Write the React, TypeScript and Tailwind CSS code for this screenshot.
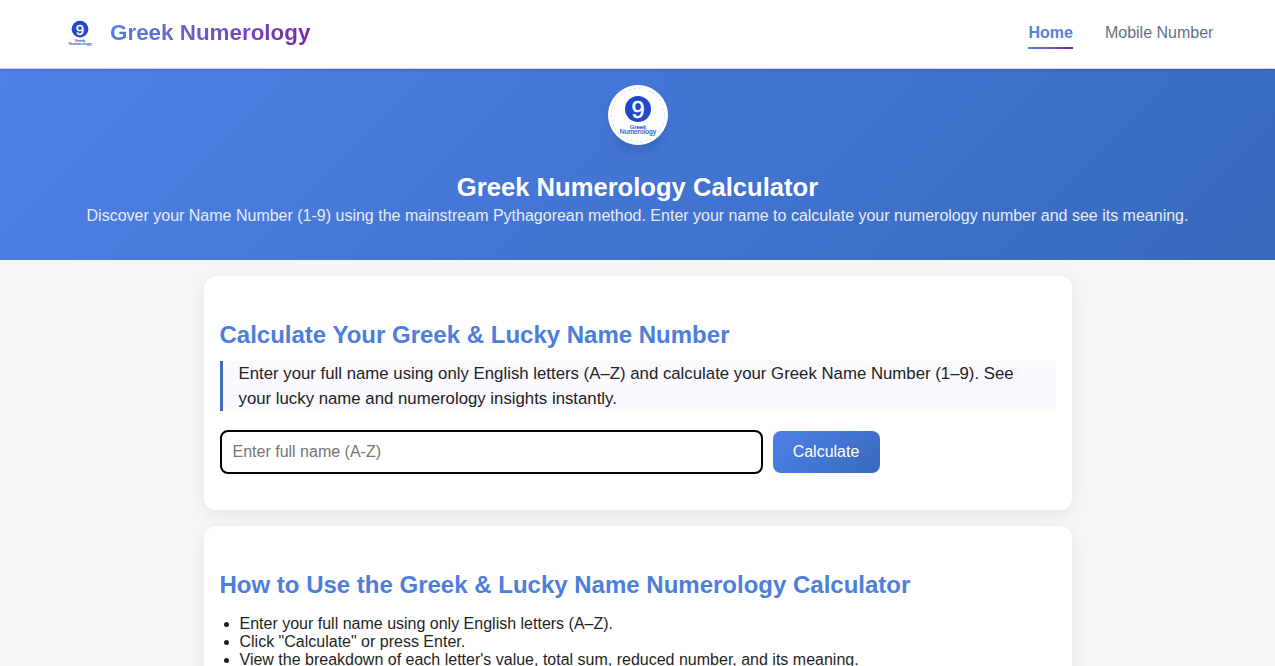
const font = "font-['Liberation_Sans',Arial,sans-serif]";

function Logo({ size }: { size: number }) {
  return (
    <svg width={size} height={size} viewBox="0 0 100 100" className="block">
      <circle cx="50" cy="38" r="26" fill="#2148c9" />
      <text x="50" y="55" textAnchor="middle" fontSize="47" fontWeight="400" stroke="#fff" strokeWidth="1" fill="#fff" fontFamily="Liberation Sans, sans-serif">
        9
      </text>
      <text x="50" y="77" textAnchor="middle" fontSize="12" fill="#2a62d4" stroke="#2a62d4" strokeWidth="0.4" fontFamily="Liberation Sans, sans-serif">
        Greek
      </text>
      <text x="50" y="88" textAnchor="middle" fontSize="13.5" fill="#2a62d4" stroke="#2a62d4" strokeWidth="0.4" fontFamily="Liberation Sans, sans-serif">
        Numerology
      </text>
    </svg>
  );
}

export default function App() {
  return (
    <div className={`h-[666px] overflow-hidden bg-[#f6f6f6] ${font} text-[#1f1f1f]`}>
      {/* Navbar */}
      <nav className="h-[69px] bg-white border-b border-[#c9d6ee] shadow-sm flex items-center justify-between pl-[64px] pr-[61.6px] pb-[2px] relative z-10">
        <div className="flex items-center gap-[14px]">
          <Logo size={32} />
          <span className="text-[22.4px] font-bold bg-gradient-to-r from-[#4f7fe0] to-[#7b24a6] bg-clip-text text-transparent">
            Greek Numerology
          </span>
        </div>
        <ul className="flex gap-[32px] text-[16px]">
          <li className="relative font-bold text-[#5582dc] h-[24px] leading-[24px]">
            Home
            <span className="absolute left-0 right-0 top-[26px] h-[2px] bg-gradient-to-r from-[#4f7fe0] to-[#7b24a6]" />
          </li>
          <li className="text-[#64708a] h-[24px] leading-[24px]">Mobile Number</li>
        </ul>
      </nav>

      {/* Hero */}
      <header className="h-[191px] bg-[linear-gradient(135deg,#4f80e8,#3769bd)] text-center flex flex-col items-center pt-[16px]">
        <div className="w-[60px] h-[60px] rounded-full bg-white shadow-lg flex items-center justify-center border border-white">
          <div className="w-[54px] h-[54px] rounded-full border border-dashed border-[#d5def0] flex items-center justify-center">
            <Logo size={50} />
          </div>
        </div>
        <h1 className="mt-[26px] text-[25.6px] leading-[32px] font-bold text-white">Greek Numerology Calculator</h1>
        <p className="mt-[1px] text-[16px] leading-[24px] text-[#e6edfa]">
          Discover your Name Number (1-9) using the mainstream Pythagorean method. Enter your name to calculate your numerology number and see its meaning.
        </p>
      </header>

      {/* Main */}
      <main className="w-[868px] mx-auto pt-[16px] flex flex-col gap-[16px]">
        <section className="h-[234px] bg-white rounded-xl shadow-[0_4px_16px_rgba(0,0,0,0.07)] px-[16px] pt-[43px]">
          <h2 className="text-[24px] leading-[32px] font-bold text-[#4d7edb]">Calculate Your Greek &amp; Lucky Name Number</h2>
          <p className="mt-[10px] w-[836px] bg-[#f9f9ff] border-l-[3px] border-[#3f6dbb] pl-[16px] pr-[16px] text-[16.8px] leading-[25px] text-[#222]">
            Enter your full name using only English letters (A–Z) and calculate your Greek Name Number (1–9). See your lucky name and numerology insights instantly.
          </p>
          <div className="mt-[19px] flex items-center gap-[10px]">
            <input
              placeholder="Enter full name (A-Z)"
              className="w-[543px] h-[44px] rounded-lg border-2 border-black px-[11px] text-[16px] outline-none placeholder:text-[#757575] bg-white"
            />
            <button className="w-[107px] h-[42px] rounded-lg bg-[linear-gradient(135deg,#4f80e8,#3769bd)] text-white text-[16px]">
              Calculate
            </button>
          </div>
        </section>

        <section className="bg-white rounded-xl shadow-[0_4px_16px_rgba(0,0,0,0.07)] px-[16px] pt-[43px] pb-[40px]">
          <h2 className="text-[24px] leading-[32px] font-bold text-[#4d7edb]">How to Use the Greek &amp; Lucky Name Numerology Calculator</h2>
          <ul className="mt-[14px] list-disc pl-[20px] text-[16px] leading-[18px] text-[#1f1f1f]">
            <li>Enter your full name using only English letters (A–Z).</li>
            <li>Click "Calculate" or press Enter.</li>
            <li>View the breakdown of each letter's value, total sum, reduced number, and its meaning.</li>
          </ul>
        </section>
      </main>
    </div>
  );
}
